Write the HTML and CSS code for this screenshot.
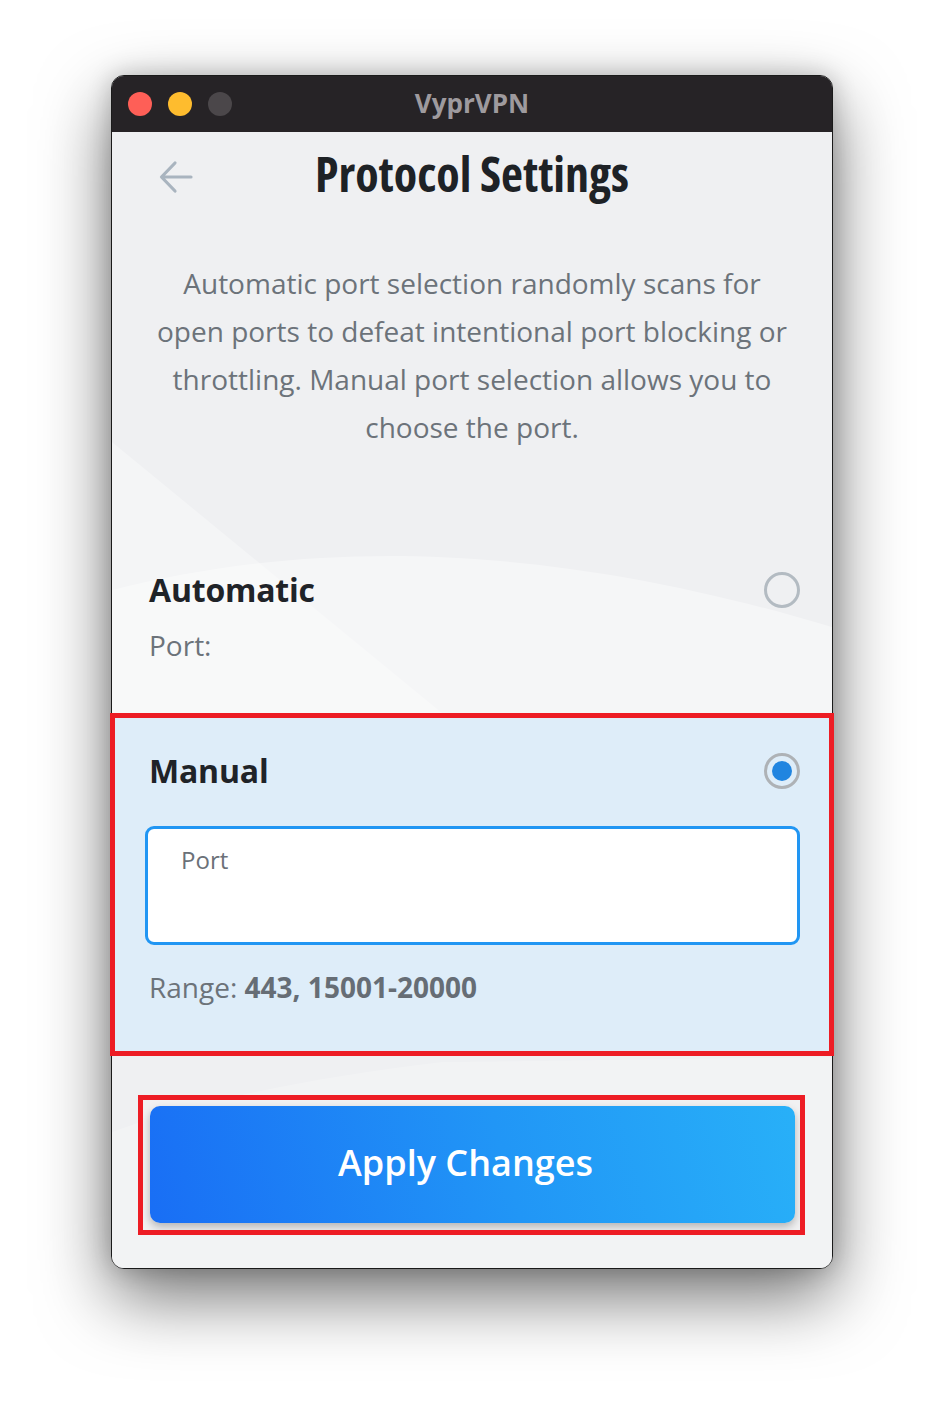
FILE: index.html
```html
<!DOCTYPE html>
<html lang="en">
<head>
<meta charset="utf-8">
<title>VyprVPN - Protocol Settings</title>
<link rel="stylesheet" href="styles.css">
</head>
<body>
<div class="window">
  <div class="titlebar">
    <div class="lights">
      <span class="light red"></span>
      <span class="light yellow"></span>
      <span class="light gray"></span>
    </div>
    <div class="app-name">VyprVPN</div>
  </div>
  <div class="content">
    <svg class="decor" width="720" height="1136" viewBox="0 0 720 1136" aria-hidden="true">
      <path d="M0 310 L335 585 L0 585 Z" fill="#ffffff" fill-opacity="0.32"/>
      <path d="M0 458 C 190 410, 420 405, 720 495 L720 585 L0 585 Z" fill="#ffffff" fill-opacity="0.38"/>
      <path d="M0 1000 C 80 970, 200 945, 330 930 L720 925 L720 1124 Q720 1136 708 1136 L12 1136 Q0 1136 0 1124 Z" fill="#ffffff" fill-opacity="0.2"/>
    </svg>
    <header class="header">
      <div class="back">
        <svg width="34" height="34" viewBox="0 0 34 34" aria-hidden="true">
          <path d="M32 17 H4 M16 3 L2.5 17 L16 31" fill="none" stroke="#a9b4bf" stroke-width="3.2" stroke-linecap="round" stroke-linejoin="round"/>
        </svg>
      </div>
      <h1 class="title">Protocol Settings</h1>
      <div></div>
    </header>
    <p class="desc">Automatic port selection randomly scans for open ports to defeat intentional port blocking or throttling. Manual port selection allows you to choose the port.</p>

    <section class="option option-auto">
      <div class="option-head">
        <span class="option-label">Automatic</span>
        <span class="radio"></span>
      </div>
      <div class="port-line">Port:</div>
    </section>

    <section class="option option-manual">
      <div class="option-head">
        <span class="option-label">Manual</span>
        <span class="radio checked"><span class="dot"></span></span>
      </div>
      <div class="port-input">
        <span class="placeholder">Port</span>
      </div>
      <div class="range">Range: <b>443, 15001-20000</b></div>
    </section>

    <div class="apply-wrap">
      <button class="apply">Apply Changes</button>
    </div>
  </div>
</div>
</body>
</html>
```
FILE: styles.css
```css
* { box-sizing: border-box; }
html, body { margin: 0; padding: 0; background: #ffffff; }
body {
  min-height: 1416px;
  padding: 75px 0 0 111px;
  font-family: "Open Sans", "Noto Sans", "Liberation Sans", sans-serif;
}
.window {
  width: 722px;
  height: 1194px;
  border: 1px solid #1a1a1a;
  border-radius: 13px;
  box-shadow: 0 28px 70px rgba(0, 0, 0, 0.55), 0 0 24px rgba(0, 0, 0, 0.2);
  display: flex;
  flex-direction: column;
  background: #eff0f2;
}
.titlebar {
  height: 56px;
  background: #262326;
  border-radius: 12px 12px 0 0;
  display: flex;
  align-items: center;
  position: relative;
  flex: none;
}
.lights {
  display: flex;
  gap: 16px;
  padding-left: 16px;
}
.light { width: 24px; height: 24px; border-radius: 50%; display: block; }
.light.red { background: #fe5f57; }
.light.yellow { background: #febc2e; }
.light.gray { background: #4b474a; }
.app-name {
  position: absolute;
  left: 0; right: 0; top: 0; bottom: 0;
  display: flex;
  align-items: center;
  justify-content: center;
  color: #9e9a9e;
  font-weight: 700;
  font-size: 26px;
  padding-bottom: 2px;
  pointer-events: none;
}
.content {
  position: relative;
  flex: 1;
  display: flex;
  flex-direction: column;
  background: #eff0f2;
  border-radius: 0 0 12px 12px;
}
.decor { position: absolute; left: 0; top: 0; z-index: 0; }
.header, .desc, .option, .apply-wrap { position: relative; z-index: 1; }
.header {
  height: 88px;
  display: grid;
  grid-template-columns: 1fr auto 1fr;
  align-items: center;
}
.back { padding-left: 47px; display: flex; align-items: center; padding-top: 2px; }
.back svg { display: block; }
.title {
  margin: 0;
  font-size: 48px;
  font-weight: 700;
  font-stretch: 75%;
  color: #1e2226;
  line-height: 1;
  padding-bottom: 5px;
}
.desc {
  margin: 39px 40px 0 40px;
  text-align: center;
  font-size: 28px;
  line-height: 48px;
  color: #6c737a;
}
.option { padding: 0 32px 0 37px; }
.option-auto { margin-top: 119px; height: 145px; }
.option-head {
  display: flex;
  align-items: center;
  justify-content: space-between;
  height: 40px;
}
.option-label {
  font-size: 32px;
  font-weight: 700;
  color: #1f2328;
  letter-spacing: -0.2px;
  padding-bottom: 2px;
}
.radio {
  width: 36px;
  height: 36px;
  border-radius: 50%;
  border: 3px solid #b3bbc2;
  display: flex;
  align-items: center;
  justify-content: center;
}
.radio.checked { border-color: #aeb2b6; }
.radio .dot { width: 20px; height: 20px; border-radius: 50%; background: #2185e0; }
.port-line {
  margin-top: 17px;
  font-size: 28px;
  line-height: 36px;
  color: #6c737a;
}
.option-manual {
  background: #deedf9;
  outline: 5px solid #ed1c24;
  outline-offset: -3px;
  padding-top: 36px;
  padding-bottom: 49px;
}
.port-input {
  margin: 35px 0 0 -4px;
  height: 119px;
  border: 3px solid #2196f3;
  border-radius: 9px;
  background: #ffffff;
  padding: 15px 33px;
}
.placeholder {
  font-size: 24px;
  line-height: 32px;
  color: #6b7178;
  display: block;
}
.range {
  margin-top: 24px;
  font-size: 28px;
  line-height: 36px;
  color: #6c737a;
}
.range b { color: #666d75; font-weight: 700; }
.apply-wrap {
  margin: 46px 32px 0 31px;
  outline: 5px solid #ed1c24;
  padding: 6px 5px 7px 7px;
  background: #f1f1f2;
}
.apply {
  display: block;
  width: 100%;
  height: 117px;
  border: none;
  border-radius: 10px;
  background: linear-gradient(75deg, #196ef5 0%, #2196f6 55%, #28b0f8 100%);
  box-shadow: 0 4px 8px rgba(0, 0, 0, 0.25);
  color: #ffffff;
  font-family: "Open Sans", "Noto Sans", sans-serif;
  font-size: 36px;
  font-weight: 600;
  padding: 0 14px 4px 0;
}
```
